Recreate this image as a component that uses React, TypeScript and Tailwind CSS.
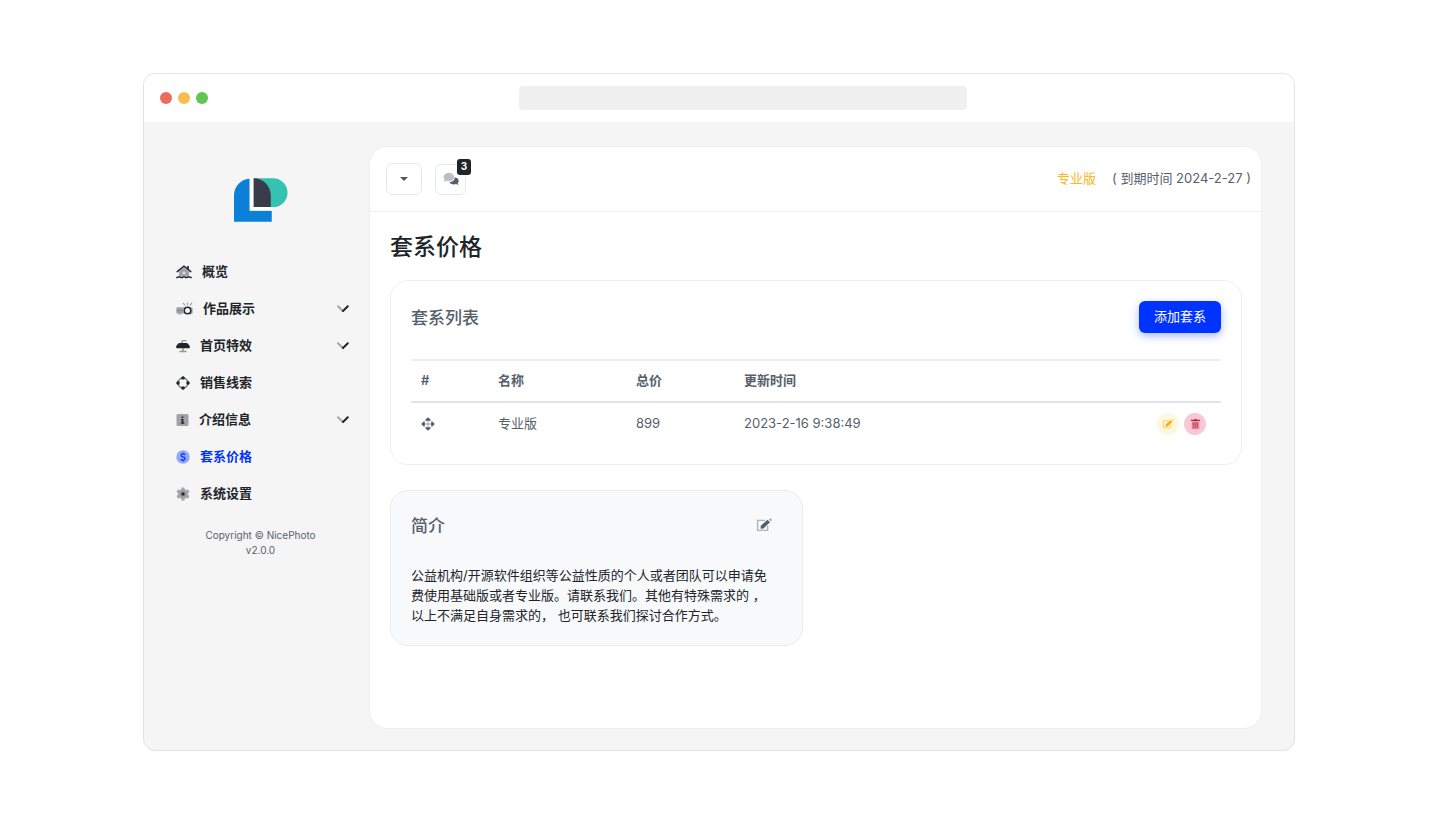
import React from 'react';
import clsx from 'clsx';

interface IconProps {
  className?: string;
}

const HomeIcon = ({ className }: IconProps) => (
  <svg viewBox="0 0 16 14" className={className} fill="none" aria-hidden="true">
    <path d="M3 6.5 8 2.5l5 4v4.700H3z" fill="currentColor" opacity=".4" />
    <path d="M1.200 6.600 8 1.200l6.800 5.400" stroke="currentColor" strokeWidth="1.500" strokeLinecap="round" />
    <path d="M11.200 1h1.700v3.500l-1.700-1.400z" fill="currentColor" />
    <path d="M6.700 6.800h2.600v2.400H6.700z" fill="#f5f5f5" opacity=".7" />
    <path d="M.8 12.600c1.300 0 1.300-.8 2.400-.8s1.200.8 2.400.8 1.300-.8 2.400-.8 1.200.8 2.400.8 1.300-.8 2.400-.8 1.100.8 2.400.8" stroke="currentColor" strokeWidth="1.500" strokeLinecap="round" />
  </svg>
);

const ProjectorIcon = ({ className }: IconProps) => (
  <svg viewBox="0 0 17 14" className={className} fill="none" aria-hidden="true">
    <path d="M1.500 5.300h6.700a5 5 0 0 0 0 6.200H5v1H2.500v-1h-1A1.200 1.200 0 0 1 .3 10.300V6.500a1.200 1.200 0 0 1 1.200-1.200zM14.800 5.300c1.200 0 1.900.5 1.900 1.600v3.300c0 .9-.5 1.300-1.200 1.400v.9h-1.700v-1.200c1.900-1.400 2.200-4 1-6z" fill="currentColor" opacity=".4" />
    <path d="M2 8.500h1M4.500 8.500h1" stroke="currentColor" strokeWidth="1.200" opacity=".6" />
    <path d="M11.500.8v2M7.300 1.200l1.400 2M15.700 1.200l-1.400 2" stroke="currentColor" strokeWidth="1.200" strokeLinecap="round" opacity=".4" />
    <circle cx="11.500" cy="8.500" r="3.300" stroke="currentColor" strokeWidth="1.600" />
  </svg>
);

const BellPlateIcon = ({ className }: IconProps) => (
  <svg viewBox="0 0 14 14" className={className} aria-hidden="true">
    <path d="M5.300 4V2.700C5.300 1.500 6 .9 7 .9h3.500v1.400H6.900V4zM6.200 9.300h1.600v2.500h2.700v1.500h-7v-1.500h2.700z" fill="currentColor" opacity=".45" />
    <path d="M3.400 3.900h7.200c1.500.6 2.700 1.900 3.200 3.500v1.200c0 .4-.3.700-.7.700H.9a.7.700 0 0 1-.7-.7V7.400c.5-1.600 1.700-2.900 3.200-3.500z" fill="currentColor" />
  </svg>
);

const LeadsIcon = ({ className }: IconProps) => (
  <svg viewBox="0 0 14 14" className={className} aria-hidden="true">
    <circle cx="7" cy="7" r="5" fill="none" stroke="currentColor" strokeWidth="1.300" opacity=".6" />
    <path d="M7 0l2 1.600-.8 2H5.800l-.8-2zM7 14l2-1.600-.8-2H5.800l-.8 2zM0 7l1.600-2 2 .8v2.400l-2 .8zM14 7l-1.600-2-2 .8v2.400l2 .8z" fill="currentColor" />
  </svg>
);

const InfoIcon = ({ className }: IconProps) => (
  <svg viewBox="0 0 13 14" className={className} aria-hidden="true">
    <rect x=".5" y="1" width="12" height="12" rx="1.500" fill="currentColor" opacity=".4" />
    <path d="M5.600 3.500h1.800v1.600H5.600zM5 6h2.400v3.400H8.300v1.300H4.800V9.400h.9V7.300H5z" fill="currentColor" />
  </svg>
);

const CoinIcon = ({ className }: IconProps) => (
  <svg viewBox="0 0 14 14" className={className} aria-hidden="true">
    <circle cx="7" cy="7" r="6.700" fill="currentColor" opacity=".4" />
    <path d="M9.100 4.900c-.4-.7-1.100-1-2.100-1-1.200 0-2 .6-2 1.500 0 2.200 4.100.9 4.100 3.200 0 1-.9 1.600-2.100 1.600-1 0-1.800-.4-2.200-1.100M7 2.700v1.200M7 10.200v1.200" fill="none" stroke="currentColor" strokeWidth="1.200" />
  </svg>
);

const GearIcon = ({ className }: IconProps) => (
  <svg viewBox="0 0 14 14" className={className} aria-hidden="true">
    <g fill="#a3a4a5">
      <circle cx="7" cy="7" r="4.900" />
      <rect x="5.400" y=".4" width="3.200" height="13.200" rx=".6" />
      <rect x="5.400" y=".4" width="3.200" height="13.200" rx=".6" transform="rotate(60 7 7)" />
      <rect x="5.400" y=".4" width="3.200" height="13.200" rx=".6" transform="rotate(120 7 7)" />
    </g>
    <circle cx="7" cy="7" r="2.500" fill="#7d7f81" />
    <circle cx="7" cy="7" r="1.400" fill="currentColor" />
  </svg>
);

const ChevronIcon = ({ className }: IconProps) => (
  <svg viewBox="0 0 14 10" className={className} fill="none" strokeWidth="2" strokeLinecap="round" aria-hidden="true">
    <path d="M2 2.300 6.500 6.800" stroke="#a6a7a9" />
    <path d="M7 7 11.800 2.300" stroke="#1f2328" />
  </svg>
);

const CommentsIcon = ({ className }: IconProps) => (
  <svg viewBox="0 0 16 14" className={className} aria-hidden="true">
    <path d="M11.700 5.300c2.300.3 4 1.700 4 3.600 0 .9-.4 1.700-1 2.300.1.700.5 1.300 1 1.700-1.100 0-2-.3-2.700-.8-2.700.8-5.800 0-6.900-2 3.300.1 5.900-1.900 5.600-4.800z" fill="#56606b" />
    <path d="M5.900 1C9 1 11.200 2.700 11.200 5S9 9.100 5.900 9.100c-.8 0-1.500-.1-2.200-.3-.8.5-1.800.9-3.200.9.600-.5 1-1.200 1.100-1.900C.9 7 .5 6.100.5 5 .5 2.700 2.800 1 5.900 1z" fill="#bbbfc3" />
  </svg>
);

const EditIcon = ({ className }: IconProps) => (
  <svg viewBox="0 0 16 14" className={className} aria-hidden="true">
    <path d="M9 2.400H1.600v10h10V8" fill="none" stroke="currentColor" strokeWidth="1.400" opacity=".45" />
    <path d="M12.700 1.600 13.900.5a.9.900 0 0 1 1.200 0l.5.5a.9.900 0 0 1 0 1.200l-1.100 1.200z" fill="currentColor" opacity=".45" />
    <path d="M4.800 7.800 11.400 1.700l2.600 2.500-6.500 6.200-2.900.4z" fill="currentColor" />
  </svg>
);

const TrashIcon = ({ className }: IconProps) => (
  <svg viewBox="0 0 12 12" className={className} aria-hidden="true">
    <path d="M2 3.200h8v8.300H2z" fill="currentColor" opacity=".45" />
    <path d="M1 1.300h3.500L5 .5h2l.5.8H11v1.500H1z" fill="currentColor" />
    <path d="M4.100 4.500v5.500M6 4.500v5.500M7.900 4.500v5.500" stroke="currentColor" strokeWidth=".7" opacity=".8" />
  </svg>
);

const MoveIcon = ({ className }: IconProps) => (
  <svg viewBox="0 0 14 14" className={className} aria-hidden="true">
    <path d="M7 2v10M2 7h10" stroke="currentColor" strokeWidth="1.300" opacity=".45" />
    <path d="M7 .2 9.600 2.600v1.200H4.400V2.600zM7 13.800l2.600-2.400v-1.200H4.400v1.200zM.2 7l2.400-2.600h1.200v5.200H2.600zM13.800 7l-2.400-2.600h-1.200v5.200h1.200z" fill="currentColor" />
  </svg>
);

const Logo = () => (
  <svg viewBox="0 0 163 131" className="h-11 w-[54px]" role="img" aria-label="NicePhoto">
    <path d="M60 0h58a43.500 43.500 0 0 1 0 87H60z" fill="#34c3b3" />
    <path d="M59 0a52 52 0 0 1 52 52v35H59z" fill="#383b48" />
    <path d="M47 1v97h67v33H0V53C0 24 20 3 47 1z" fill="#0a80d8" />
    <path d="M53 1v91h61" fill="none" stroke="#fff" strokeWidth="10" />
  </svg>
);

const menuItems = [
  { label: '概览', icon: HomeIcon, size: 'h-[14px] w-4' },
  { label: '作品展示', icon: ProjectorIcon, size: 'h-[14px] w-[17px]', expandable: true },
  { label: '首页特效', icon: BellPlateIcon, size: 'h-[14px] w-[14px]', expandable: true },
  { label: '销售线索', icon: LeadsIcon, size: 'h-[14px] w-[14px]' },
  { label: '介绍信息', icon: InfoIcon, size: 'h-[14px] w-[13px]', expandable: true },
  { label: '套系价格', icon: CoinIcon, size: 'h-[14px] w-[14px]', active: true },
  { label: '系统设置', icon: GearIcon, size: 'h-[14px] w-[14px]' },
];

const packages = [{ id: 1, name: '专业版', price: 899, updatedAt: '2023-2-16 9:38:49' }];

function Sidebar() {
  return (
    <aside className="flex w-[225px] shrink-0 flex-col pt-14">
      <div className="flex justify-center pl-2">
        <Logo />
      </div>
      <nav className="mt-[31px] pr-[19px] pl-8">
        <ul>
          {menuItems.map(({ label, icon: Icon, size, expandable, active }) => (
            <li key={label}>
              <a
                href="#"
                aria-current={active ? 'page' : undefined}
                className={clsx(
                  'flex h-[37px] items-center gap-[10px] text-[13px] font-semibold',
                  active ? 'text-[#0033ff]' : 'text-[#212529]'
                )}
              >
                <Icon className={clsx('shrink-0', size)} />
                <span className="flex-1">{label}</span>
                {expandable && <ChevronIcon className="h-[10px] w-[14px]" />}
              </a>
            </li>
          ))}
        </ul>
      </nav>
      <footer className="mt-4 pl-2 text-center text-[10px] leading-[15px] text-[#5a626b]">
        <p>Copyright © NicePhoto</p>
        <p>v2.0.0</p>
      </footer>
    </aside>
  );
}

function TopBar() {
  return (
    <header className="flex h-[65px] items-center border-b border-[#eeeff0] pr-[10px] pl-4">
      <button
        type="button"
        aria-label="菜单"
        className="flex h-8 w-9 items-center justify-center rounded-md border border-[#e4e9ef]"
      >
        <svg viewBox="0 0 8 4" className="h-1 w-2" aria-hidden="true">
          <path d="M0 0h8L4 4z" fill="#4f5964" />
        </svg>
      </button>
      <button
        type="button"
        aria-label="消息"
        className="relative ml-[13px] flex h-[31px] w-[31px] items-center justify-center rounded-md border border-[#e4e9ef]"
      >
        <CommentsIcon className="h-[14px] w-4 shrink-0" />
        <span className="absolute -top-[6px] -right-[6px] flex h-4 w-[14px] items-center justify-center rounded-[3px] bg-[#212529] text-[10px] font-bold text-white">
          3
        </span>
      </button>
      <p className="ml-auto flex gap-4 text-[13px]">
        <span className="text-[#ffb525]">专业版</span>
        <span>( 到期时间 2024-2-27 )</span>
      </p>
    </header>
  );
}

function PackageTable() {
  return (
    <section className="rounded-[18px] border border-[#eeeff1] px-5 pt-5 pb-5">
      <div className="flex items-center justify-between">
        <h2 className="pt-[3px] text-[17px] font-medium">套系列表</h2>
        <button
          type="button"
          className="h-8 rounded-md bg-[#0033ff] px-[15px] text-[13px] text-white shadow-[0_3px_8px_rgba(0,51,255,0.35)]"
        >
          添加套系
        </button>
      </div>
      <table className="mt-[26px] w-full table-fixed border-t-2 border-[#eeeff1] text-left text-[13px]">
        <thead>
          <tr className="h-[42px] border-b-2 border-[#dfe4ea]">
            <th className="w-[77px] pl-[10px] font-semibold">#</th>
            <th className="w-[138px] pl-[10px] font-semibold">名称</th>
            <th className="w-[108px] pl-[10px] font-semibold">总价</th>
            <th className="pl-[10px] font-semibold">更新时间</th>
            <th className="w-[90px]" aria-label="操作" />
          </tr>
        </thead>
        <tbody>
          {packages.map(item => (
            <tr key={item.id} className="h-[42px]">
              <td className="pl-[10px]">
                <MoveIcon className="h-[14px] w-[14px]" />
              </td>
              <td className="pl-[10px]">{item.name}</td>
              <td className="pl-[10px]">{item.price}</td>
              <td className="pl-[10px]">{item.updatedAt}</td>
              <td className="pr-[15px]">
                <div className="flex justify-end gap-[5px]">
                  <button
                    type="button"
                    aria-label="编辑"
                    className="flex h-[22px] w-[22px] items-center justify-center rounded-full bg-[#fff6e0] text-[#ffab00]"
                  >
                    <EditIcon className="h-[10px] w-3" />
                  </button>
                  <button
                    type="button"
                    aria-label="删除"
                    className="flex h-[22px] w-[22px] items-center justify-center rounded-full bg-[#f8c8d3] text-[#c21f45]"
                  >
                    <TrashIcon className="h-3 w-[11px]" />
                  </button>
                </div>
              </td>
            </tr>
          ))}
        </tbody>
      </table>
    </section>
  );
}

function IntroCard() {
  return (
    <section className="rounded-[18px] border border-[#e9edf0] bg-[#f8f9fb] px-5 pt-5 pb-5">
      <div className="flex h-7 items-center justify-between pr-[10px]">
        <h2 className="pt-[3px] text-[17px] font-medium">简介</h2>
        <button type="button" aria-label="编辑简介">
          <EditIcon className="h-[14px] w-4" />
        </button>
      </div>
      <p className="mt-[26px] text-[13px] leading-5 text-[#212529]">
        公益机构/开源软件组织等公益性质的个人或者团队可以申请免
        <br />
        费使用基础版或者专业版。请联系我们。其他有特殊需求的 ，
        <br />
        以上不满足自身需求的， 也可联系我们探讨合作方式。
      </p>
    </section>
  );
}

export default function App() {
  return (
    <div
      lang="zh-CN"
      className="flex min-h-screen bg-white px-[143px] pt-[73px] pb-[78px] font-['Inter','Noto_Sans_CJK_SC',sans-serif] text-[#56606b]"
    >
      <div className="flex min-w-0 flex-1 flex-col overflow-hidden rounded-xl border border-[#e3e3e3] bg-[#f5f5f5]">
        <div className="flex h-12 items-center bg-white px-4">
          <div className="flex gap-[6px]">
            <span className="h-3 w-3 rounded-full bg-[#ed6a5e]" />
            <span className="h-3 w-3 rounded-full bg-[#f5bf4f]" />
            <span className="h-3 w-3 rounded-full bg-[#61c554]" />
          </div>
          <input aria-label="地址栏" readOnly className="mx-auto h-6 w-2/5 rounded bg-[#f0f0f0] px-3 text-xs outline-none" />
        </div>

        <div className="flex flex-1">
          <Sidebar />
          <main className="mt-6 mr-8 mb-[21px] min-w-0 flex-1 rounded-[18px] border border-[#eeeeee] bg-white">
            <TopBar />
            <div className="pt-[18px] pr-[19px] pb-5 pl-5">
              <h1 className="text-[23px] leading-[34px] font-medium text-[#212529]">套系价格</h1>
              <div className="mt-4">
                <PackageTable />
              </div>
              <div className="mt-[25px] grid grid-cols-2 gap-[26px]">
                <IntroCard />
              </div>
            </div>
          </main>
        </div>
      </div>
    </div>
  );
}
